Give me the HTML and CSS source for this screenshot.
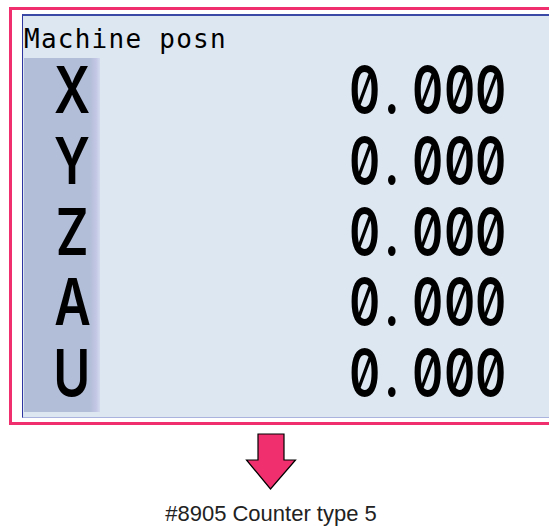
FILE: index.html
```html
<!DOCTYPE html>
<html lang="en">
    <head>
        <meta charset="UTF-8">
        <title>Machine posn - Counter type 5</title>
        <link rel="stylesheet" href="styles.css">
    </head>
    <body>

        <div class="frame">
            <div class="panel">
                <div class="title">Machine posn</div>
                <div class="axes">
                    <div class="axis"><span class="name">X</span></div>
                    <div class="value"><span class="num"><b>0</b><b>.</b><b>0</b><b>0</b><b>0</b></span></div>
                    <div class="axis"><span class="name">Y</span></div>
                    <div class="value"><span class="num"><b>0</b><b>.</b><b>0</b><b>0</b><b>0</b></span></div>
                    <div class="axis"><span class="name">Z</span></div>
                    <div class="value"><span class="num"><b>0</b><b>.</b><b>0</b><b>0</b><b>0</b></span></div>
                    <div class="axis"><span class="name">A</span></div>
                    <div class="value"><span class="num"><b>0</b><b>.</b><b>0</b><b>0</b><b>0</b></span></div>
                    <div class="axis"><span class="name">U</span></div>
                    <div class="value"><span class="num"><b>0</b><b>.</b><b>0</b><b>0</b><b>0</b></span></div>
                </div>
            </div>
        </div>

        <div class="caption">
            <svg class="arrow" width="52" height="57" viewBox="0 0 52 57">
                <polygon points="13,1 39,1 39,27 50.5,27 25.5,56 1.5,27 13,27" fill="#f0306e" stroke="#000" stroke-width="1.2" stroke-linejoin="miter"/>
            </svg>
            <p class="label">#8905 Counter type 5</p>
        </div>

    </body>
</html>
```

FILE: styles.css
```css
* {
    margin: 0;
    padding: 0;
    box-sizing: border-box;
}
html, body {
    overflow: hidden;
}
body {
    background: #FFF;
    color: #000;
    width: 549px;
    height: 526px;
    font-family: "DejaVu Sans Mono", monospace;
}
.frame {
    margin: 7px 0 0 9px;
    border: 3px solid #f0306e;
    border-right: 0;
    padding: 4px 0 4px 10px;
}
.panel {
    background: #dde7f1;
    border-top: 2px solid #3b49a6;
    border-left: 1px solid #2e34a0;
    border-bottom: 1px solid #a9b3dd;
    padding-bottom: 5px;
}
.title {
    font-size: 26px;
    line-height: 38px;
    padding: 4px 0 0 1px;
    letter-spacing: 1.25px;
    height: 42px;
}
.axes {
    display: grid;
    grid-template-columns: 76px 1fr;
    grid-auto-rows: 70.8px;
    margin-left: 1px;
}
.axis,
.value {
    font-family: Inter, "DejaVu Sans", sans-serif;
    font-weight: 600;
    font-feature-settings: "zero" 1, "tnum" 1;
    font-size: 64.5px;
    line-height: 65.1px;
    padding-bottom: 5.7px;
    white-space: nowrap;
}
.axis {
    background: linear-gradient(to right, #b2bed8 0, #b2bed8 66px, #c3c6e4 72px, #d3dbee 76px);
    text-align: center;
    padding-left: 20px;
}
.value {
    display: flex;
    justify-content: flex-end;
    padding-right: 46px;
}
.name {
    display: inline-block;
    transform: scaleX(0.78);
}
.num {
    display: flex;
}
.num b {
    font-weight: inherit;
    width: 31.7px;
    text-align: center;
    transform: scaleX(0.75);
}
.caption {
    width: 542px;
    padding-top: 8px;
    display: flex;
    flex-direction: column;
    align-items: center;
}
.arrow {
    display: block;
}
.label {
    margin-top: 11px;
    font: 22px/25px "Liberation Sans", Arial, sans-serif;
    color: #222;
}
```
